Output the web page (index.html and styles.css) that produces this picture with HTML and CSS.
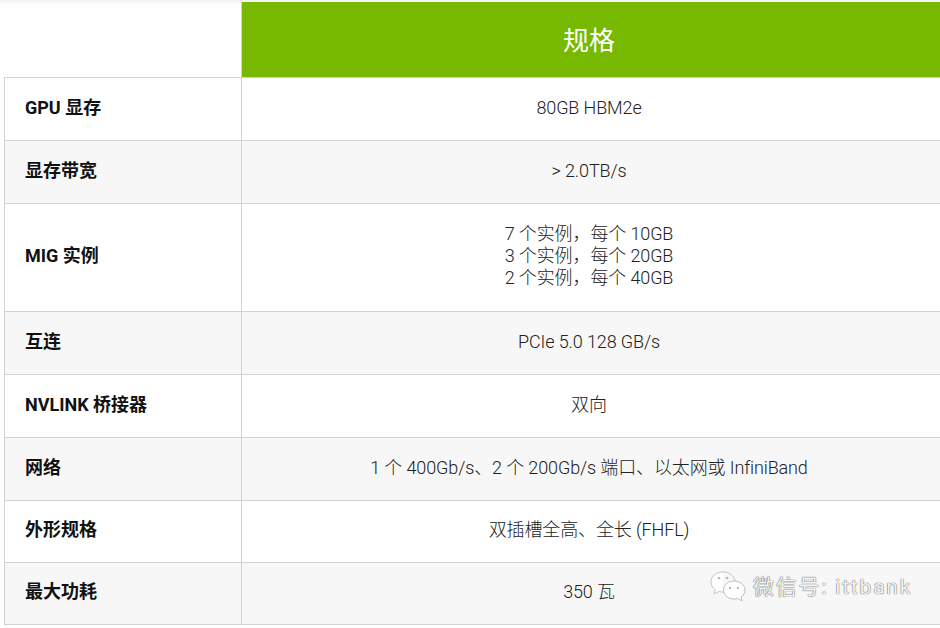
FILE: index.html
```
<!DOCTYPE html>
<html lang="zh">
<head>
<meta charset="utf-8">
<title>规格</title>
<link rel="stylesheet" href="styles.css">
</head>
<body>
<div class="page">
<table class="specs">
<thead>
<tr><th class="blank"></th><th class="head">规格</th></tr>
</thead>
<tbody>
<tr class="h63"><th>GPU 显存</th><td>80GB HBM2e</td></tr>
<tr class="h63 alt"><th>显存带宽</th><td>&gt; 2.0TB/s</td></tr>
<tr class="h108"><th>MIG 实例</th><td>7 个实例，每个 10GB<br>3 个实例，每个 20GB<br>2 个实例，每个 40GB</td></tr>
<tr class="h63 alt"><th>互连</th><td>PCIe 5.0 128 GB/s</td></tr>
<tr class="h63"><th>NVLINK 桥接器</th><td>双向</td></tr>
<tr class="h63 alt"><th>网络</th><td>1 个 400Gb/s、2 个 200Gb/s 端口、以太网或 InfiniBand</td></tr>
<tr class="h62"><th>外形规格</th><td>双插槽全高、全长 (FHFL)</td></tr>
<tr class="h62 alt"><th>最大功耗</th><td>350 瓦</td></tr>
</tbody>
</table>
<div class="mark">
<svg class="wechat" width="38" height="34" viewBox="0 0 38 34" aria-hidden="true">
<path d="M14 2C7 2 2 6.400 2 12c0 3.200 1.700 5.900 4.300 7.800L5 24l4.800-2.500c1.500.4 2.900.6 4.600.6" fill="#fff" stroke="#c4c4c4" stroke-width="1"/>
<path d="M14 2c6 0 11 3.500 12 8.500" fill="none" stroke="#c4c4c4"/>
<path d="M25 11c-6 0-10.500 4-10.500 9s4.500 9 10.500 9c1.300 0 2.500-.2 3.600-.5L33 31l-1-4c2.600-1.700 4-4.200 4-7 0-5-5-9-11-9z" fill="#fff" stroke="#bdbdbd"/>
<circle cx="10" cy="8" r="1.300" fill="#bbb"/><circle cx="18" cy="8" r="1.300" fill="#bbb"/>
<circle cx="21" cy="18" r="1.100" fill="#aaa"/><circle cx="29" cy="18" r="1.100" fill="#aaa"/>
</svg>
<span>微信号: ittbank</span>
</div>
</div>
</body>
</html>
```
FILE: styles.css
```
* { box-sizing: border-box; }
html, body { margin: 0; padding: 0; background: #fff; }
.page {
  position: relative;
  width: 940px;
  height: 628px;
  padding: 2px 0 0 4px;
  overflow: hidden;
  background: linear-gradient(#f1f1f1, #fff 5px);
  font-family: Roboto, "Noto Sans CJK SC", sans-serif;
  color: #222;
}
.specs {
  width: 936px;
  table-layout: fixed;
  border-collapse: collapse;
  font-size: 18px;
  line-height: 22px;
}
.blank { width: 237px; height: 75px; background: transparent; border: 0; }
.head {
  background: #76b900;
  color: #fff;
  font-size: 26px;
  font-weight: 400;
  border: 0;
  border-left: 1px solid #d0d0d0;
  padding: 4px 4px 0 0;
}
tbody th, tbody td { border: 1px solid #d2d2d2; border-right: 0; padding: 0 0 2px; }
tbody th {
  text-align: left;
  padding-left: 20px;
  font-weight: 700;
  font-size: 18px;
  color: #111;
  background: #fff;
}
tbody td { text-align: center; font-weight: 300; letter-spacing: -.12px; padding-right: 4px; }
.h63 { height: 63px; }
.h62 { height: 62px; }
.h108 { height: 108px; }
.alt th, .alt td { background: #f7f7f7; }
.mark {
  position: absolute;
  left: 709px;
  top: 570px;
  display: flex;
  align-items: center;
  gap: 6px;
  font-size: 21px;
  letter-spacing: 1.800px;
  line-height: 34px;
  color: #f4f4f4;
  text-shadow: 0 0 1px #555, 0 0 1px #777;
}
.wechat { flex: none; }
```
